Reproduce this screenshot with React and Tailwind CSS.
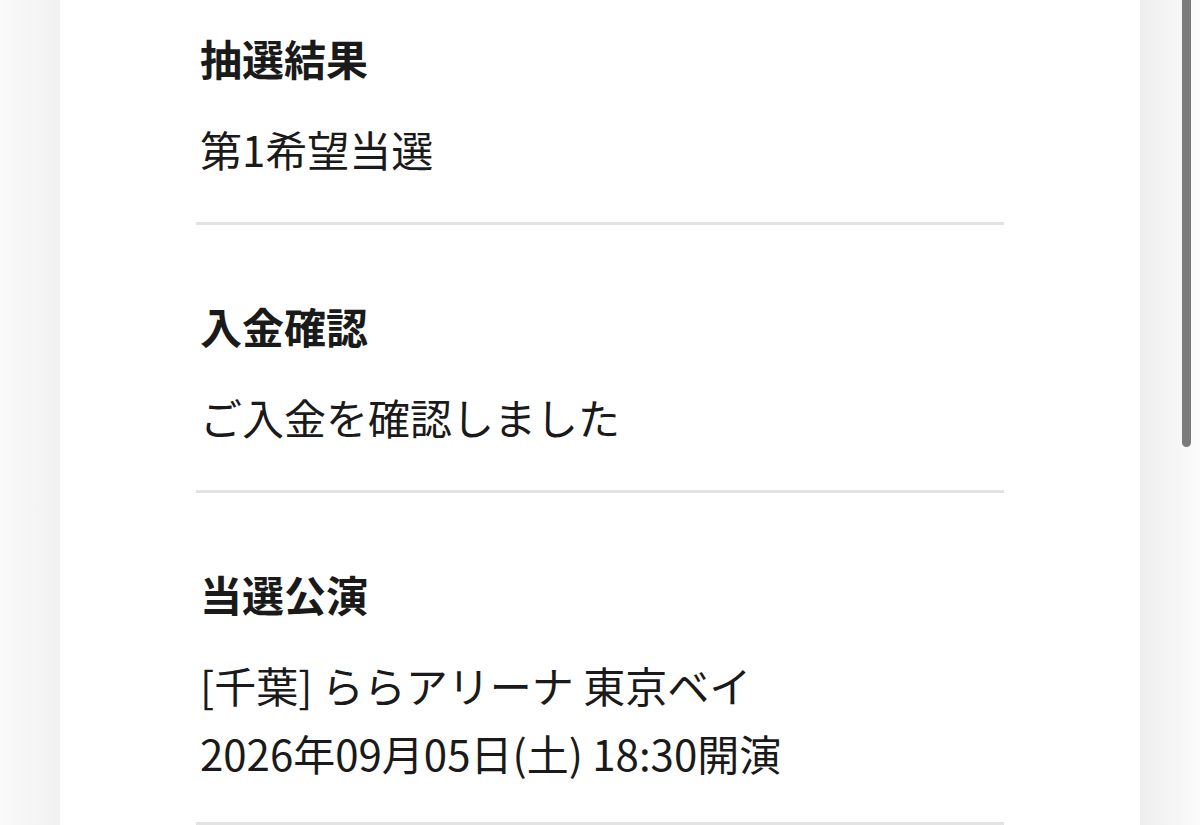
export default function App() {
  const sections = [
    { title: "抽選結果", lines: ["第1希望当選"], last: false },
    { title: "入金確認", lines: ["ご入金を確認しました"], last: false },
    {
      title: "当選公演",
      lines: ["[千葉] ららアリーナ 東京ベイ", "2026年09月05日(土) 18:30開演"],
      last: true,
    },
  ];

  return (
    <div
      className="relative flex h-[825px] w-[1200px] overflow-hidden text-[#1a1a1a]"
      style={{ fontFamily: '"Noto Sans CJK JP", "Noto Sans", sans-serif' }}
    >
      {/* left gutter */}
      <div className="w-[60px] shrink-0 bg-gradient-to-r from-[#fafafa] to-[#f1f1f1]" />

      {/* detail card */}
      <div className="w-[1080px] shrink-0 bg-white pl-[136px] pr-[136px]">
        <div className="flex flex-col">
          {sections.map((s, i) => (
            <div key={s.title} className="flex flex-col">
              <div
                className={
                  (i === 0 ? "pt-[28px] " : "pt-[71px] ") +
                  (s.last ? "pb-[35px] " : "pb-[39px] ") +
                  "flex flex-col pl-[4px]"
                }
              >
                <h2 className="h-[60px] text-[42px] font-bold leading-[60px]">
                  {s.title}
                </h2>
                <div className="mt-[27px] flex flex-col">
                  {s.lines.map((l) => (
                    <p key={l} className="h-[68px] text-[42px] leading-[68px]">
                      {l}
                    </p>
                  ))}
                </div>
              </div>
              <div className="h-[3px] w-[808px] bg-[#e3e3e3]" />
            </div>
          ))}
        </div>
      </div>

      {/* right gutter */}
      <div className="flex-1 bg-gradient-to-r from-[#eeeeee] to-[#fbfbfb]" />

      {/* scroll indicator */}
      <div className="absolute left-[1182px] top-[-20px] h-[467px] w-[9px] rounded-full bg-[#7b7b7b]" />
    </div>
  );
}
